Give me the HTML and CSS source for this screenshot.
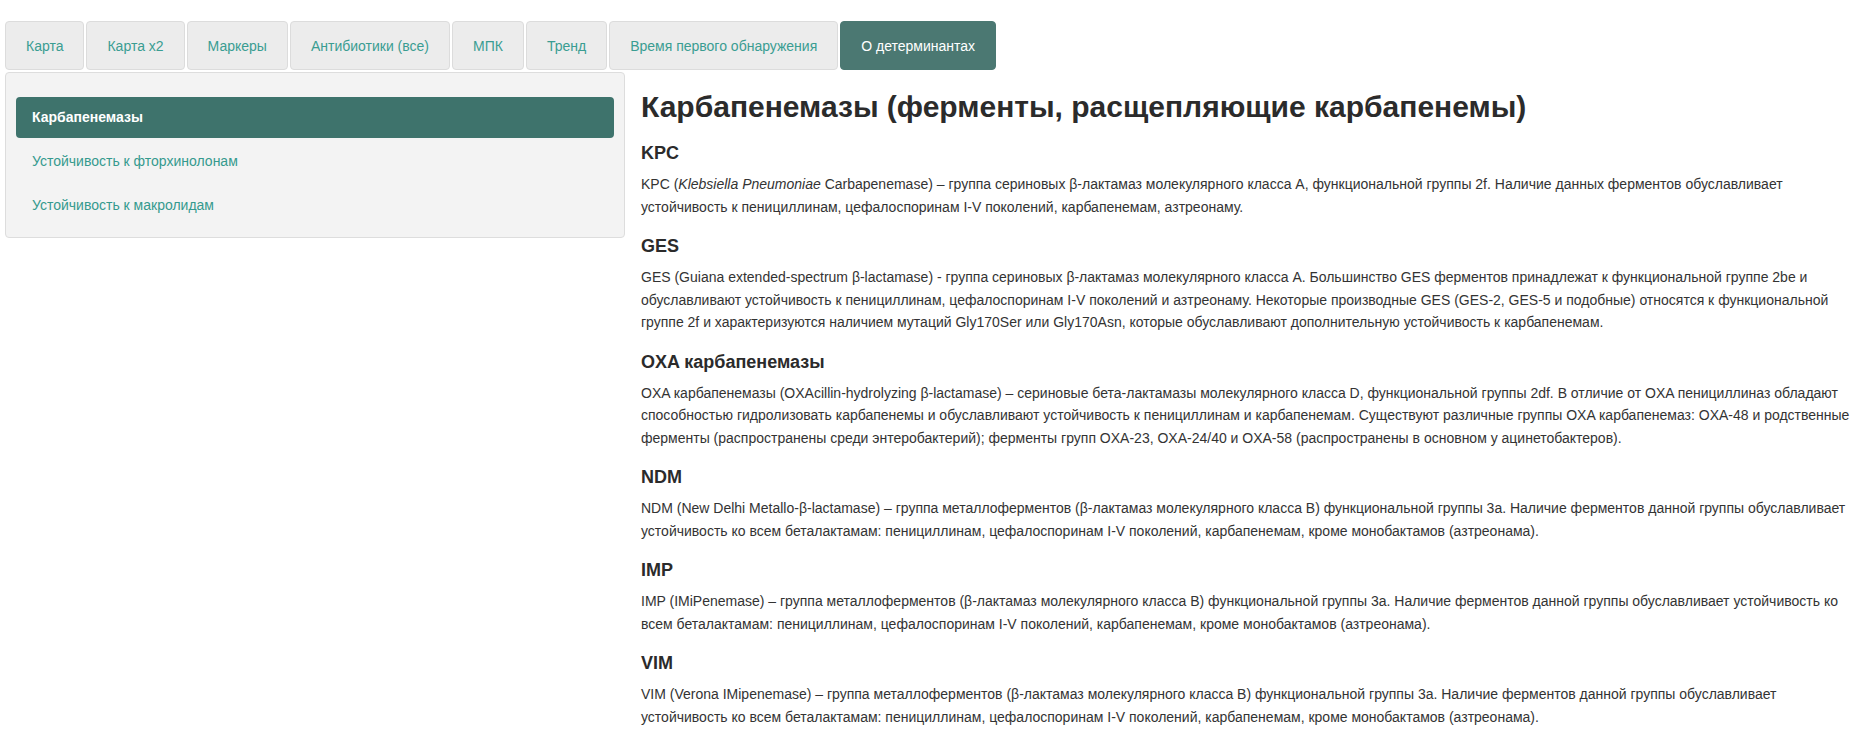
FILE: index.html
```html
<!DOCTYPE html>
<html lang="ru">
<head>
<meta charset="utf-8">
<title>О детерминантах</title>
<link rel="stylesheet" href="styles.css">
</head>
<body>
<div class="page">
  <ul class="tabs">
    <li class="tab">Карта</li>
    <li class="tab">Карта x2</li>
    <li class="tab">Маркеры</li>
    <li class="tab">Антибиотики (все)</li>
    <li class="tab">МПК</li>
    <li class="tab">Тренд</li>
    <li class="tab">Время первого обнаружения</li>
    <li class="tab tab-active">О детерминантах</li>
  </ul>
  <div class="layout">
    <aside class="sidebar">
      <ul class="side-nav">
        <li class="side-item side-active">Карбапенемазы</li>
        <li class="side-item">Устойчивость к фторхинолонам</li>
        <li class="side-item">Устойчивость к макролидам</li>
      </ul>
    </aside>
    <main class="content">
      <h2 class="title">Карбапенемазы (ферменты, расщепляющие карбапенемы)</h2>

      <h4 class="sub">KPC</h4>
      <p class="text">KPC (<i>Klebsiella Pneumoniae</i> Carbapenemase) – группа сериновых β-лактамаз молекулярного класса А, функциональной группы 2f. Наличие данных ферментов обуславливает устойчивость к пенициллинам, цефалоспоринам I-V поколений, карбапенемам, азтреонаму.</p>

      <h4 class="sub">GES</h4>
      <p class="text">GES (Guiana extended-spectrum β-lactamase) - группа сериновых β-лактамаз молекулярного класса А. Большинство GES ферментов принадлежат к функциональной группе 2be и обуславливают устойчивость к пенициллинам, цефалоспоринам I-V поколений и азтреонаму. Некоторые производные GES (GES-2, GES-5 и подобные) относятся к функциональной группе 2f и характеризуются наличием мутаций Gly170Ser или Gly170Asn, которые обуславливают дополнительную устойчивость к карбапенемам.</p>

      <h4 class="sub">OXA карбапенемазы</h4>
      <p class="text">OXA карбапенемазы (OXAcillin-hydrolyzing β-lactamase) – сериновые бета-лактамазы молекулярного класса D, функциональной группы 2df. В отличие от OXA пенициллиназ обладают способностью гидролизовать карбапенемы и обуславливают устойчивость к пенициллинам и карбапенемам. Существуют различные группы OXA карбапенемаз: OXA-48 и родственные ферменты (распространены среди энтеробактерий); ферменты групп OXA-23, OXA-24/40 и OXA-58 (распространены в основном у ацинетобактеров).</p>

      <h4 class="sub">NDM</h4>
      <p class="text">NDM (New Delhi Metallo-β-lactamase) – группа металлоферментов (β-лактамаз молекулярного класса В) функциональной группы 3а. Наличие ферментов данной группы обуславливает устойчивость ко всем беталактамам: пенициллинам, цефалоспоринам I-V поколений, карбапенемам, кроме монобактамов (азтреонама).</p>

      <h4 class="sub">IMP</h4>
      <p class="text">IMP (IMiPenemase) – группа металлоферментов (β-лактамаз молекулярного класса В) функциональной группы 3а. Наличие ферментов данной группы обуславливает устойчивость ко всем беталактамам: пенициллинам, цефалоспоринам I-V поколений, карбапенемам, кроме монобактамов (азтреонама).</p>

      <h4 class="sub">VIM</h4>
      <p class="text">VIM (Verona IMipenemase) – группа металлоферментов (β-лактамаз молекулярного класса В) функциональной группы 3а. Наличие ферментов данной группы обуславливает устойчивость ко всем беталактамам: пенициллинам, цефалоспоринам I-V поколений, карбапенемам, кроме монобактамов (азтреонама).</p>
    </main>
  </div>
</div>
</body>
</html>
```
FILE: styles.css
```css
* { box-sizing: border-box; }
html, body { margin: 0; padding: 0; background: #fff; }
body {
  font-family: "Liberation Sans", Arial, Helvetica, sans-serif;
  font-size: 14px;
  color: #333;
}
.page { padding: 21px 7px 0 5px; }

.tabs {
  list-style: none;
  margin: 0;
  padding: 0;
  display: flex;
  gap: 2px;
}
.tab {
  display: block;
  padding: 14px 20px 13px;
  line-height: 20px;
  font-size: 14px;
  color: #3a9d92;
  background: #ececec;
  border: 1px solid #dcdcdc;
  border-radius: 4px;
  white-space: nowrap;
}
.tab-active {
  color: #fff;
  background: #4b7872;
  border-color: #4b7872;
}

.layout {
  display: flex;
  align-items: flex-start;
  gap: 16px;
  margin-top: 2px;
}
.sidebar {
  flex: 0 0 620px;
  background: #f3f3f3;
  border: 1px solid #dddddd;
  border-radius: 4px;
  padding: 24px 10px 11px;
}
.side-nav { list-style: none; margin: 0; padding: 0; }
.side-item {
  display: block;
  padding: 0 16px;
  height: 41px;
  line-height: 41px;
  color: #359a8e;
  border-radius: 4px;
}
.side-item + .side-item { margin-top: 3px; }
.side-active {
  background: #3e736c;
  color: #fff;
  font-weight: bold;
}

.content { flex: 1 1 auto; min-width: 0; }
.title {
  font-size: 30px;
  font-weight: bold;
  line-height: 33px;
  margin: 18px 0 0;
  color: #2b2b2b;
}
.sub {
  font-size: 18px;
  font-weight: bold;
  line-height: 20px;
  margin: 18px 0 10px;
  color: #2b2b2b;
}
.title + .sub { margin-top: 20px; }
.text {
  margin: 0;
  line-height: 22.5px;
  font-size: 14px;
}
```
